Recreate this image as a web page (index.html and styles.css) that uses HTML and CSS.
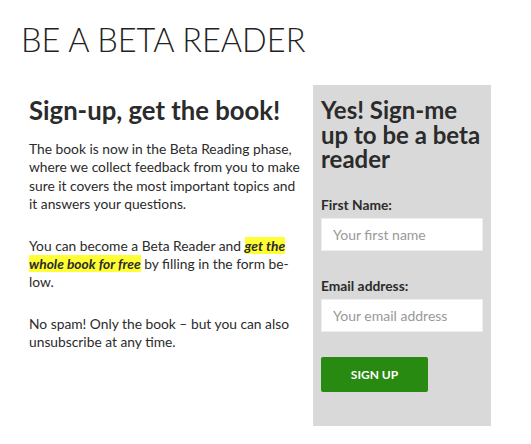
FILE: index.html
```html
<!DOCTYPE html>
<html lang="en">
<head>
  <meta charset="UTF-8" />
  <meta name="viewport" content="width=device-width, initial-scale=1.0"/>
  <title>Be a Beta Reader</title>
  <link rel="stylesheet" href="styles.css">
</head>
<body>

  <header>
    <h1 class="page-title">BE A BETA READER</h1>
  </header>

  <main class="content">
    <section class="intro">
      <h2>Sign-up, get the book!</h2>
      <p>The book is now in the Beta Reading phase, where we collect feedback from you to make sure it covers the most important topics and it answers your questions.</p>
      <p>You can become a Beta Reader and <mark>get the whole book for free</mark> by filling in the form be&shy;low.</p>
      <p>No spam! Only the book &ndash; but you can also unsubscribe at any time.</p>
    </section>

    <aside class="signup">
      <h3>Yes! Sign-me up to be a beta reader</h3>
      <form>
        <label for="firstName">First Name:</label>
        <input type="text" id="firstName" placeholder="Your first name">
        <label for="email">Email address:</label>
        <input type="email" id="email" placeholder="Your email address">
        <button type="button">SIGN UP</button>
      </form>
    </aside>
  </main>

</body>
</html>
```

FILE: styles.css
```css
* { box-sizing: border-box; }

body {
  margin: 0;
  font-family: Lato, 'Open Sans', sans-serif;
  color: #2b2b2b;
  background: #fff;
}

header {
  padding: 21px 0 0 21px;
}

.page-title {
  margin: 0;
  font-size: 32.5px;
  font-weight: 300;
  line-height: 38px;
  color: #222;
}

.content {
  display: flex;
  align-items: flex-start;
  padding: 26px 0 0 29px;
  gap: 10px;
}

.intro {
  width: 274px;
  padding-top: 10px;
}

.intro h2 {
  margin: 0 0 15px;
  font-size: 25.7px;
  font-weight: bold;
  line-height: 30px;
}

.intro p {
  margin: 0 0 23px;
  font-size: 13.8px;
  line-height: 18.4px;
}

.intro mark {
  background: #ffff33;
  color: inherit;
  font-weight: bold;
  font-style: italic;
}

.signup {
  width: 178px;
  min-height: 341px;
  background: #d9d9d9;
  padding: 13px 8px 32px;
}

.signup h3 {
  margin: 0 0 24px;
  font-size: 24px;
  font-weight: bold;
  line-height: 24.5px;
}

.signup form {
  display: flex;
  flex-direction: column;
  align-items: flex-start;
}

.signup label {
  font-size: 13.8px;
  font-weight: bold;
  margin-bottom: 5px;
}

.signup input {
  width: 162px;
  height: 33px;
  padding: 0 11px;
  border: 1px solid #eee;
  background: #fff;
  font-family: inherit;
  font-size: 14px;
  margin-bottom: 26px;
}

.signup input::placeholder {
  color: #999;
}

.signup button {
  width: 107px;
  height: 35px;
  margin-top: -1px;
  background: #288a10;
  color: #fff;
  border: none;
  border-radius: 2px;
  font-family: inherit;
  font-size: 12px;
  font-weight: bold;
  cursor: pointer;
}
```
